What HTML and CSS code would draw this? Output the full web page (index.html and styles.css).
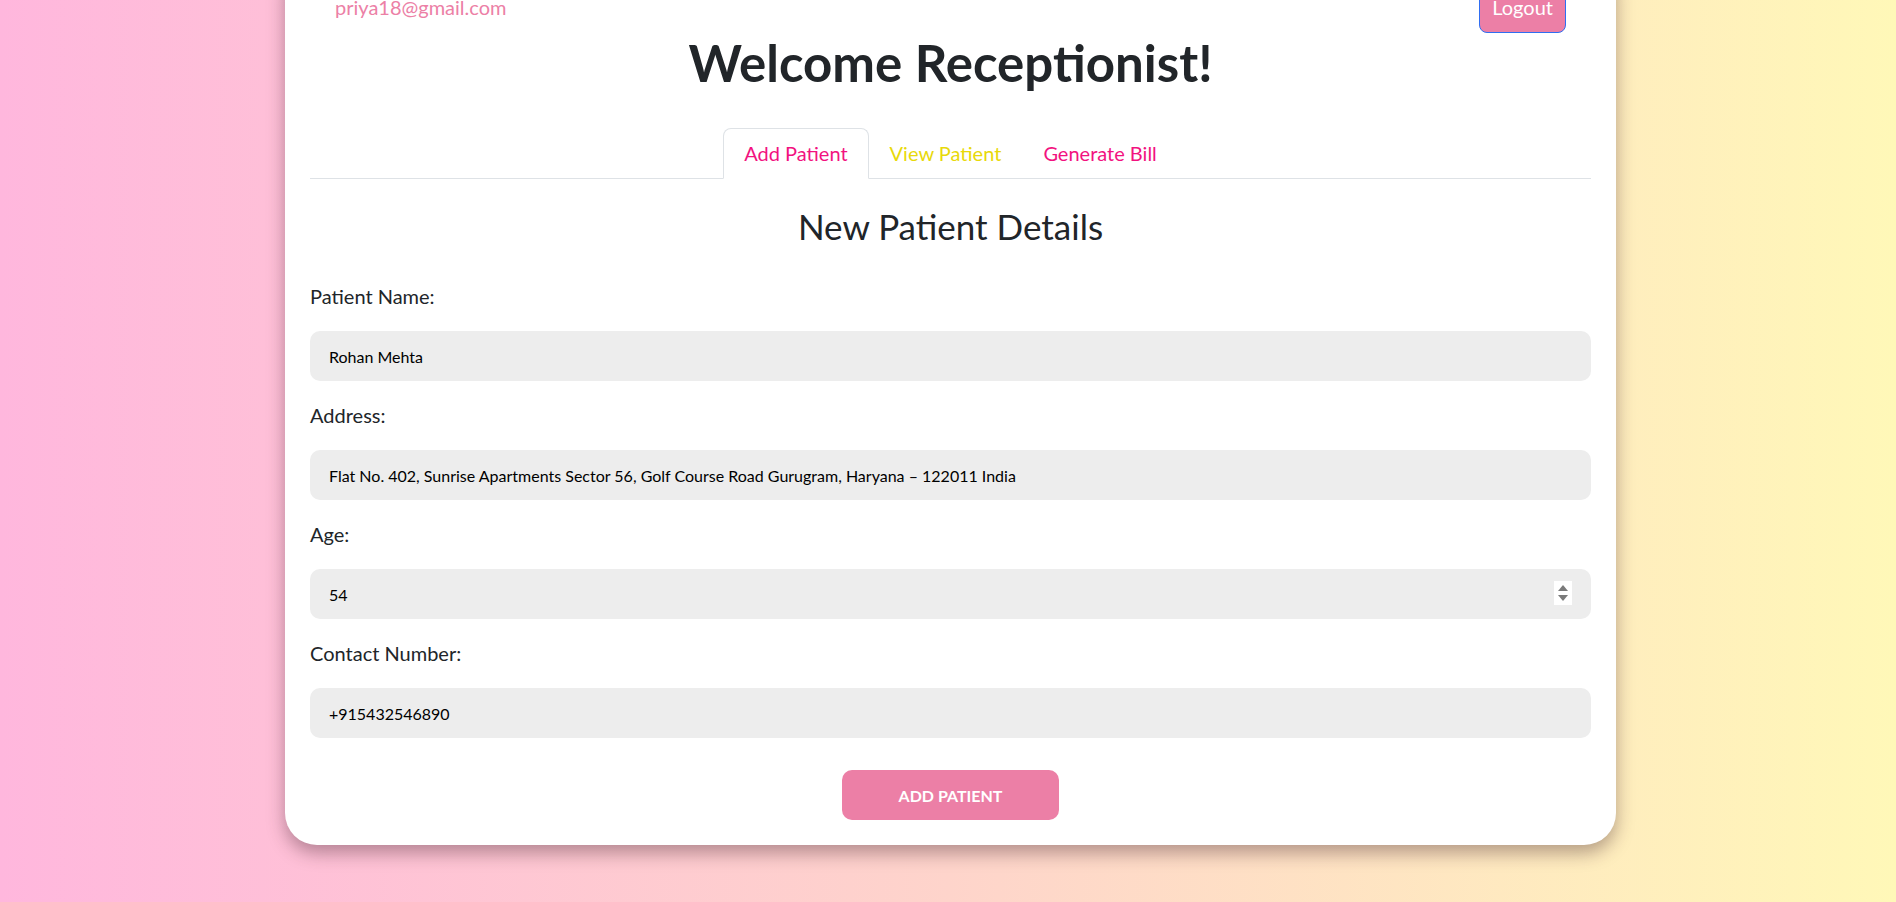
FILE: index.html
```html
<!DOCTYPE html>
<html lang="en">
<head>
<meta charset="utf-8">
<title>Receptionist Dashboard</title>
<link rel="stylesheet" href="styles.css">
</head>
<body>
<div class="page">
  <main class="card">
    <header class="topbar">
      <span class="email">priya18@gmail.com</span>
      <button class="logout" type="button">Logout</button>
    </header>
    <h1 class="welcome">Welcome Receptionist!</h1>
    <nav class="tabs">
      <a class="tab tab-active">Add Patient</a>
      <a class="tab tab-yellow">View Patient</a>
      <a class="tab">Generate Bill</a>
    </nav>
    <h2 class="section-title">New Patient Details</h2>
    <form class="patient-form">
      <label class="field-label" for="pname">Patient Name:</label>
      <input class="field-input" id="pname" type="text" value="Rohan Mehta">
      <label class="field-label" for="paddr">Address:</label>
      <input class="field-input" id="paddr" type="text" value="Flat No. 402, Sunrise Apartments Sector 56, Golf Course Road Gurugram, Haryana – 122011 India">
      <label class="field-label" for="page">Age:</label>
      <div class="number-wrap">
        <input class="field-input field-number" id="page" type="number" value="54">
        <span class="spinner" aria-hidden="true"><span class="arrow-up"></span><span class="arrow-down"></span></span>
      </div>
      <label class="field-label" for="pphone">Contact Number:</label>
      <input class="field-input" id="pphone" type="text" value="+915432546890">
      <div class="actions">
        <button class="submit" type="button">ADD PATIENT</button>
      </div>
    </form>
  </main>
</div>
</body>
</html>
```
FILE: styles.css
```css
* { box-sizing: border-box; }
html, body { margin: 0; padding: 0; }
body {
  font-family: Lato, "Open Sans", sans-serif;
  color: #212529;
  background: linear-gradient(to right, #ffb7dd 0%, #fed4cb 50%, #fff8b8 100%);
  min-height: 902px;
  overflow: hidden;
}
.page {
  padding-left: 5px;
  padding-bottom: 56px;
}
.card {
  width: 1331px;
  margin: -45px auto 0;
  background: #fff;
  border-radius: 32px;
  box-shadow: 0 8px 18px rgba(60, 30, 40, 0.38);
  padding: 26px 25px 25px;
}
.topbar {
  display: flex;
  justify-content: space-between;
  align-items: center;
  padding: 0 25px;
}
.email {
  font-size: 20px;
  line-height: 30px;
  color: #ec80a6;
}
.logout {
  font-family: inherit;
  font-size: 20px;
  line-height: 30px;
  padding: 10px 12px;
  color: #fff;
  background: #ec7fa6;
  border: 1px solid #2f6ef2;
  border-radius: 8px;
}
.welcome {
  margin: -1px 0 0;
  text-align: center;
  font-size: 51px;
  font-weight: 700;
  line-height: 1.2;
  color: #212529;
}
.tabs {
  display: flex;
  justify-content: center;
  border-bottom: 1px solid #dee2e6;
  margin-top: 35px;
}
.tab {
  display: block;
  font-size: 20px;
  line-height: 28px;
  padding: 10px 20px 11px;
  margin-bottom: -1px;
  border: 1px solid transparent;
  border-radius: 8px 8px 0 0;
  color: #f2127f;
}
.tab-active {
  border-color: #dee2e6 #dee2e6 #fff;
  background: #fff;
}
.tab-yellow { color: #e8d90a; }
.section-title {
  margin: 26px 0 0;
  text-align: center;
  font-size: 35px;
  font-weight: 400;
  line-height: 1.2;
  color: #212529;
}
.patient-form {
  display: flex;
  flex-direction: column;
  margin-top: 35px;
}
.field-label {
  font-size: 20px;
  line-height: 28px;
  margin-bottom: 21px;
  color: #212529;
}
.field-input {
  height: 50px;
  width: 100%;
  border: none;
  border-radius: 10px;
  background: #ededed;
  padding: 0 19px 0 19px;
  font-family: Lato, sans-serif;
  font-size: 16px;
  color: #000;
  margin-bottom: 20px;
  outline: none;
}
.number-wrap {
  position: relative;
}
.field-number {
  display: block;
  -moz-appearance: textfield;
}
.field-number::-webkit-inner-spin-button,
.field-number::-webkit-outer-spin-button {
  -webkit-appearance: none;
  margin: 0;
}
.spinner {
  position: absolute;
  right: 19px;
  top: 12px;
  width: 18px;
  height: 24px;
  background: #fff;
  display: flex;
  flex-direction: column;
  align-items: center;
  justify-content: center;
  gap: 4px;
}
.arrow-up {
  width: 0;
  height: 0;
  border-left: 5.5px solid transparent;
  border-right: 5.5px solid transparent;
  border-bottom: 6px solid #7a7a7a;
}
.arrow-down {
  width: 0;
  height: 0;
  border-left: 5.5px solid transparent;
  border-right: 5.5px solid transparent;
  border-top: 6px solid #7a7a7a;
}
.actions {
  display: flex;
  justify-content: center;
  margin-top: 12px;
}
.submit {
  width: 217px;
  height: 50px;
  border: none;
  border-radius: 10px;
  background: #ec7fa6;
  color: #fff;
  font-family: Lato, sans-serif;
  font-weight: 700;
  font-size: 16px;
}
```
